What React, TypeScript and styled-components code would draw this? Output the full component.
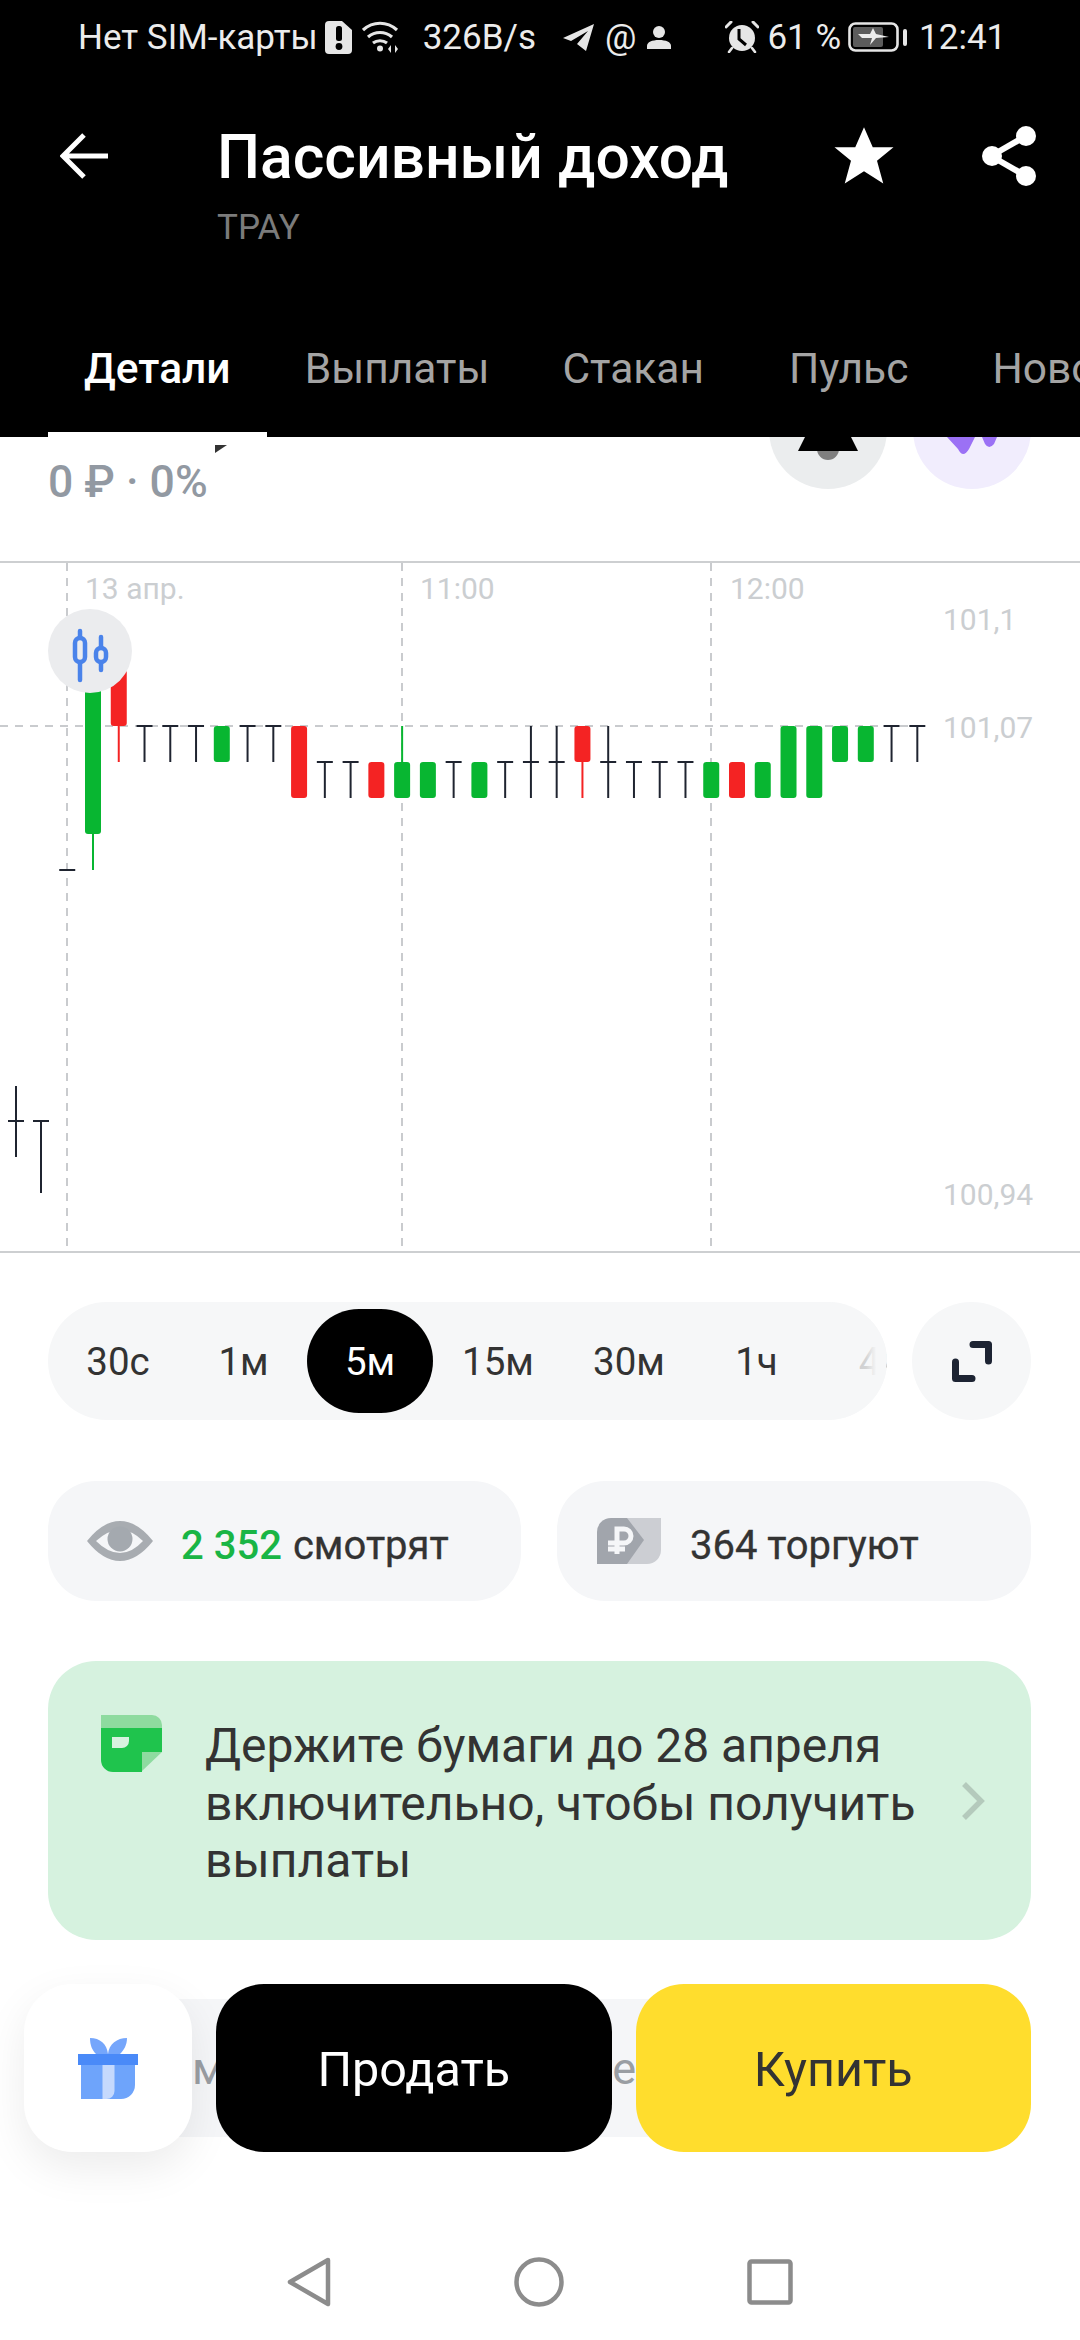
import React from 'react';
import styled, { createGlobalStyle } from 'styled-components';

const GlobalStyle = createGlobalStyle`
    html, body {
        margin: 0;
        padding: 0;
        background: #fff;
    }
    * {
        box-sizing: border-box;
    }
`
const Page = styled.div`
    position: relative;
    display: flex;
    flex-direction: column;
    width: 1080px;
    height: 2340px;
    overflow: hidden;
    background: #fff;
    font-family: Roboto, "Noto Sans", sans-serif;
    color: #333;
`
const Header = styled.header`
    position: relative;
    z-index: 2;
    display: flex;
    flex-direction: column;
    height: 437px;
    flex-shrink: 0;
    background: #000;
    color: #fff;
`
const StatusBar = styled.div`
    display: flex;
    align-items: center;
    height: 74px;
    padding-left: 78px;
    font-size: 35px;
    color: #ececec;
    white-space: nowrap;
`
const StatusGroup = styled.div<{ $left?: number; $gap?: number }>`
    display: flex;
    align-items: center;
    gap: ${p => p.$gap ?? 8}px;
    margin-left: ${p => p.$left ?? 0}px;
`
const TitleRow = styled.div`
    display: flex;
    align-items: flex-start;
    height: 150px;
    padding: 52px 44px 0 60px;
`
const BackButton = styled.div`
    width: 48px;
    height: 46px;
    margin-top: 7px;
    margin-right: 109px;
`
const TitleBlock = styled.div`
    flex: 1;
`
const Title = styled.h1`
    margin: 0;
    font-size: 60.6px;
    font-weight: 500;
    line-height: 64px;
    white-space: nowrap;
`
const Ticker = styled.div`
    margin-top: 18px;
    font-size: 35px;
    line-height: 40px;
    color: #7b7b7b;
`
const HeaderIcons = styled.div`
    display: flex;
    align-items: center;
    gap: 88px;
`
const Tabs = styled.nav`
    display: flex;
    margin-top: auto;
    padding-left: 48px;
    height: 138px;
    overflow: hidden;
`
const Tab = styled.div<{ $active?: boolean; $left?: number }>`
    position: relative;
    display: flex;
    align-items: center;
    flex-shrink: 0;
    padding: 0 36px;
    margin-left: ${p => p.$left ?? 0}px;
    font-size: 42.5px;
    color: ${p => (p.$active ? '#fff' : '#a4a4a4')};
    font-weight: ${p => (p.$active ? 500 : 400)};

    ${p => p.$active && `
        &::after {
            content: '';
            position: absolute;
            left: 0;
            right: 0;
            bottom: 0;
            height: 5px;
            background: #fff;
        }
    `}
`
const Main = styled.main`
    position: relative;
    flex: 1;
    overflow: hidden;
`
const Summary = styled.section`
    display: flex;
    justify-content: space-between;
    height: 124px;
    padding: 0 49px 0 48px;
    overflow: hidden;
`
const ClippedGlyph = styled.div`
    height: 21px;
    padding: 1px 0 0 167px;
`
const Amount = styled.div`
    font-size: 44.5px;
    line-height: 48px;
    font-weight: 500;
    color: #9299a2;
`
const RoundButtons = styled.div`
    display: flex;
    gap: 26px;
    margin-top: -66px;
`
const RoundButton = styled.div<{ $tint: string }>`
    display: flex;
    justify-content: center;
    width: 118px;
    height: 118px;
    padding-top: 66px;
    border-radius: 50%;
    background: ${p => p.$tint};
`
const ChartBox = styled.section`
    height: 692px;
    border-top: 2px solid #cdcfd1;
    border-bottom: 2px solid #cdcfd1;
`
const ChartSvg = styled.svg`
    display: block;
    width: 1080px;
    height: 688px;
`
const IntervalRow = styled.div`
    display: flex;
    gap: 25px;
    margin: 49px 49px 0 48px;
`
const IntervalPill = styled.div`
    position: relative;
    display: flex;
    align-items: center;
    width: 839px;
    height: 118px;
    padding-left: 4px;
    border-radius: 59px;
    background: #f6f7f8;
    overflow: hidden;
`
const IntervalItem = styled.div<{ $active?: boolean; $nudge: number }>`
    display: flex;
    align-items: center;
    justify-content: center;
    flex-shrink: 0;
    width: 126px;
    margin-right: 1.5px;
    height: 104px;
    padding-left: ${p => p.$nudge}px;
    border-radius: 52px;
    font-size: 38.5px;
    color: ${p => (p.$active ? '#fff' : '#333')};
    background: ${p => (p.$active ? '#000' : 'transparent')};
`
const FadeEdge = styled.div`
    position: absolute;
    top: 0;
    right: 0;
    width: 70px;
    height: 100%;
    background: linear-gradient(90deg, rgba(246, 247, 248, 0.7), rgba(246, 247, 248, 0.82) 70%, #f6f7f8 85%);
`
const RoundSquare = styled.div`
    display: flex;
    align-items: center;
    justify-content: center;
    width: 119px;
    height: 118px;
    border-radius: 50%;
    background: #f6f7f8;
`
const StatsRow = styled.div`
    display: flex;
    gap: 36px;
    margin: 61px 49px 0 48px;
`
const StatCard = styled.div<{ $pad: number; $gap: number }>`
    display: flex;
    align-items: center;
    flex: 1;
    gap: ${p => p.$gap}px;
    height: 120px;
    padding-left: ${p => p.$pad}px;
    border-radius: 48px;
    background: #f5f6f8;
    font-size: 40px;
    color: #333;
    white-space: nowrap;
`
const StatText = styled.div`
    padding-top: 9px;
    -webkit-text-stroke: 0.3px #333;
`
const Green = styled.span`
    margin-right: 11px;
    color: #19b545;
    font-weight: 500;
    -webkit-text-stroke: 0;
`
const Banner = styled.div`
    display: flex;
    align-items: flex-start;
    height: 279px;
    margin: 60px 49px 0 48px;
    padding: 54px 46px 0 53px;
    border-radius: 48px;
    background: #d6f2df;
`
const BannerIcon = styled.div`
    width: 61px;
    height: 57px;
    flex-shrink: 0;
`
const BannerText = styled.div`
    flex: 1;
    margin: 2px 0 0 43px;
    font-size: 48px;
    line-height: 57.5px;
    color: #333;
    white-space: nowrap;
`
const BannerChevron = styled.div`
    align-self: center;
    margin-top: -50px;
`
const PeekPill = styled.div`
    display: flex;
    justify-content: space-between;
    align-items: center;
    height: 138px;
    margin: 59px 49px 0 48px;
    padding: 0 395px 0 144px;
    border-radius: 48px;
    background: #f5f6f8;
    font-size: 45px;
    color: #9a9ea3;
`
const BottomBar = styled.div`
    position: absolute;
    left: 24px;
    right: 49px;
    top: 1547px;
    display: flex;
    gap: 24px;
`
const GiftButton = styled.div`
    display: flex;
    align-items: center;
    justify-content: center;
    width: 168px;
    height: 168px;
    border-radius: 48px;
    background: #fff;
    box-shadow: 0 16px 44px rgba(0, 0, 0, 0.08);
`
const ActionButton = styled.div<{ $bg: string; $fg: string }>`
    display: flex;
    align-items: center;
    justify-content: center;
    flex: 1;
    height: 168px;
    padding-top: 2px;
    border-radius: 48px;
    background: ${p => p.$bg};
    color: ${p => p.$fg};
    font-size: 48.5px;
`
const NavBar = styled.div`
    display: flex;
    align-items: center;
    justify-content: center;
    gap: 183px;
    height: 116px;
    flex-shrink: 0;
`

type Kind = 'green' | 'red' | 'doji'
interface ICandle {
    i: number
    kind: Kind
    high: number
    low: number
    top?: number
    bottom?: number
}

const levelA = 726
const levelB = 762
const levelC = 798

const body = (i: number, kind: Kind, top: number, bottom: number, high = top, low = bottom): ICandle =>
    ({ i, kind, high, low, top, bottom })
const cross = (i: number, bar: number, high: number, low: number): ICandle =>
    ({ i, kind: 'doji', high, low, top: bar, bottom: bar })

const candles: ICandle[] = [
    cross(-1, 870, 870, 870),
    body(0, 'green', 680, 834, 680, 870),
    body(1, 'red', 670, levelA, 670, levelB),
    cross(2, levelA, levelA, levelB),
    cross(3, levelA, levelA, levelB),
    cross(4, levelA, levelA, levelB),
    body(5, 'green', levelA, levelB),
    cross(6, levelA, levelA, levelB),
    cross(7, levelA, levelA, levelB),
    body(8, 'red', levelA, levelC),
    cross(9, levelB, levelB, levelC),
    cross(10, levelB, levelB, levelC),
    body(11, 'red', levelB, levelC),
    body(12, 'green', levelB, levelC, levelA, levelC),
    body(13, 'green', levelB, levelC),
    cross(14, levelB, levelB, levelC),
    body(15, 'green', levelB, levelC),
    cross(16, levelB, levelB, levelC),
    cross(17, levelB, levelA, levelC),
    cross(18, levelB, levelA, levelC),
    body(19, 'red', levelA, levelB, levelA, levelC),
    cross(20, levelB, levelA, levelC),
    cross(21, levelB, levelB, levelC),
    cross(22, levelB, levelB, levelC),
    cross(23, levelB, levelB, levelC),
    body(24, 'green', levelB, levelC),
    body(25, 'red', levelB, levelC),
    body(26, 'green', levelB, levelC),
    body(27, 'green', levelA, levelC),
    body(28, 'green', levelA, levelC),
    body(29, 'green', levelA, levelB),
    body(30, 'green', levelA, levelB),
    cross(31, levelA, levelA, levelB),
    cross(32, levelA, levelA, levelB),
]

const colors: Record<Kind, string> = { green: '#08b631', red: '#f42323', doji: '#1f2430' }

const CandleMark = ({ candle }: { candle: ICandle }) => {
    const x = 93 + candle.i * 25.76
    const color = colors[candle.kind]
    if (candle.kind === 'doji') {
        return (
            <g stroke={color} strokeWidth="2">
                {candle.high !== candle.low && <line x1={x} x2={x} y1={candle.high} y2={candle.low} />}
                <line x1={x - 8} x2={x + 8} y1={candle.top} y2={candle.top} />
            </g>
        )
    }
    return (
        <g>
            <line x1={x} x2={x} y1={candle.high} y2={candle.low} stroke={color} strokeWidth="2" />
            <rect x={x - 8} y={candle.top} width="16" height={candle.bottom! - candle.top!} rx="3" fill={color} />
        </g>
    )
}

const Chart = () => (
    <ChartSvg viewBox="0 563 1080 688">
        <g stroke="#c9cbce" strokeWidth="2" strokeDasharray="8 7">
            <line x1="67" x2="67" y1="563" y2="1251" />
            <line x1="402" x2="402" y1="563" y2="1251" />
            <line x1="711" x2="711" y1="563" y2="1251" />
            <line x1="0" x2="930" y1="726" y2="726" />
        </g>
        <g fill="#cbced1" fontFamily="Roboto, sans-serif" fontSize="30">
            <text x="85" y="599">13 апр.</text>
            <text x="420" y="599">11:00</text>
            <text x="730" y="599">12:00</text>
            <text x="943" y="630">101,1</text>
            <text x="943" y="738">101,07</text>
            <text x="943" y="1205">100,94</text>
        </g>
        {candles.map(c => <CandleMark key={c.i} candle={c} />)}
        <g stroke="#1f2430" strokeWidth="2">
            <line x1="16" x2="16" y1="1086" y2="1157" />
            <line x1="8" x2="24" y1="1121" y2="1121" />
            <line x1="41" x2="41" y1="1121" y2="1193" />
            <line x1="33" x2="49" y1="1121" y2="1121" />
        </g>
        <circle cx="90" cy="651" r="42" fill="#ebecee" />
        <g stroke="#4a83ea" strokeLinecap="round" fill="none">
            <line x1="80" x2="80" y1="631" y2="680" strokeWidth="4.5" />
            <rect x="75" y="638" width="10" height="24" rx="5" strokeWidth="4.5" fill="#ebecee" />
            <line x1="101" x2="101" y1="637" y2="670" strokeWidth="4.5" />
            <rect x="96" y="648" width="10" height="14" rx="5" strokeWidth="4.5" fill="#ebecee" />
        </g>
    </ChartSvg>
)

const SimAlert = () => (
    <svg width="27" height="33" viewBox="0 0 27 33">
        <path d="M4 0h13l10 9v20a4 4 0 0 1-4 4H4a4 4 0 0 1-4-4V4a4 4 0 0 1 4-4z" fill="#e6e6e6" />
        <rect x="11" y="5" width="6" height="15" rx="2.5" fill="#000" />
        <circle cx="14" cy="25.5" r="3.4" fill="#000" />
    </svg>
)
const Wifi = () => (
    <svg width="38" height="32" viewBox="0 0 38 32" fill="none" stroke="#e6e6e6" strokeWidth="3.2">
        <path d="M1 9c10-9 24-9 34 0" />
        <path d="M6 16c7-6 17-6 24 0" />
        <path d="M11 22c4-3 10-3 14 0" />
        <circle cx="18" cy="27.5" r="3" fill="#e6e6e6" stroke="none" />
        <path d="M26 28l3-4v8zM36 28l-3 4v-8z" fill="#e6e6e6" stroke="none" />
    </svg>
)
const TelegramArrow = () => (
    <svg width="31" height="27" viewBox="0 0 31 27">
        <path d="M0 14 31 0 23 27 14 20 25 7 8 17z" fill="#e6e6e6" />
    </svg>
)
const Person = () => (
    <svg width="24" height="23" viewBox="0 0 24 23" fill="#e6e6e6">
        <circle cx="12" cy="6" r="6" />
        <path d="M0 23v-3c0-4 5-6 12-6s12 2 12 6v3z" />
    </svg>
)
const AlarmIcon = () => (
    <svg width="34" height="32" viewBox="0 0 34 32">
        <circle cx="17" cy="17" r="13" fill="#e6e6e6" />
        <path d="M14 8v10l7 6" stroke="#000" strokeWidth="3" fill="none" />
        <path d="M1 6 6 1M33 6 28 1" stroke="#e6e6e6" strokeWidth="3" strokeLinecap="round" />
        <path d="M7 27 4 31M27 27l3 4" stroke="#e6e6e6" strokeWidth="2.6" strokeLinecap="round" />
    </svg>
)
const Battery = () => (
    <svg width="59" height="30" viewBox="0 0 59 30">
        <rect x="1.5" y="1.5" width="48" height="27" rx="6" fill="none" stroke="#e6e6e6" strokeWidth="2.6" />
        <rect x="5" y="5" width="30" height="20" rx="2" fill="#5c5c5c" />
        <path d="M10 12h12l3-6 3 6 13 3-13 1-6 7 2-7H14z" fill="#ececec" />
        <rect x="55" y="7" width="4" height="17" rx="2" fill="#e6e6e6" />
    </svg>
)
const BackArrow = () => (
    <svg width="48" height="46" viewBox="0 0 48 46" fill="none" stroke="#fff" strokeWidth="5">
        <path d="M48 23H3M24 2 3 23l21 21" />
    </svg>
)
const Star = () => (
    <svg width="60" height="58" viewBox="0 0 24 23" fill="#fff">
        <path d="M12 0l3.5 8h8.3l-6.6 5.4 2.5 9.1L12 17.6l-7.7 4.9 2.5-9.1L.2 8h8.3z" />
    </svg>
)
const Share = () => (
    <svg width="54" height="60" viewBox="0 0 54 60">
        <g stroke="#fff" strokeWidth="6">
            <line x1="44" y1="10" x2="9" y2="30" />
            <line x1="44" y1="50" x2="9" y2="30" />
        </g>
        <g fill="#fff">
            <circle cx="44" cy="10" r="10" />
            <circle cx="44" cy="50" r="10" />
            <circle cx="10" cy="30" r="10" />
        </g>
    </svg>
)
const TitleTail = () => (
    <svg width="12" height="8" viewBox="0 0 12 8" fill="#333">
        <path d="M0 0h12L0 8z" />
    </svg>
)
const Bell = () => (
    <svg width="60" height="23" viewBox="0 0 60 23">
        <circle cx="30" cy="12" r="11" fill="#7f7f7f" />
        <path d="M7 0h46l7 14H0z" fill="#000" />
    </svg>
)
const PurpleMark = () => (
    <svg width="50" height="18" viewBox="0 0 50 18" fill="#9b71f5">
        <path d="M0 0h28l-6 12q-6 10-11 0zM35 0h15l-3 7q-5 6-9 0z" />
    </svg>
)
const Fullscreen = () => (
    <svg width="40" height="41" viewBox="0 0 40 41" fill="none" stroke="#1d2433" strokeWidth="7" strokeLinejoin="round" strokeLinecap="round">
        <path d="M21 3.5h15.5V20M3.5 21v16.5H20" />
    </svg>
)
const Eye = () => (
    <svg width="66" height="40" viewBox="0 0 66 40">
        <path d="M0 20 Q16 0 33 0 Q50 0 66 20 Q50 40 33 40 Q16 40 0 20z" fill="#a8acb1" />
        <path d="M9 20 Q21 9 33 9 Q45 9 56 20 Q45 32 33 32 Q21 32 9 20z" fill="#f5f6f8" />
        <circle cx="33" cy="18" r="12.5" fill="#a4a9af" />
    </svg>
)
const RubleCard = () => (
    <svg width="64" height="46" viewBox="0 0 64 46">
        <path d="M28 0h36v32a14 14 0 0 1-14 14H28z" fill="#ccced3" />
        <path d="M0 14A14 14 0 0 1 14 0h16l17 22-17 24H0z" fill="#a1a5ac" />
        <path d="M20 36V11h7a6.5 6.5 0 0 1 0 14H11M11 31h17" stroke="#f5f6f8" strokeWidth="5" fill="none" />
    </svg>
)
const NoteIcon = () => (
    <svg width="61" height="57" viewBox="0 0 61 57">
        <path d="M0 0h51a10 10 0 0 1 10 10v3H0z" fill="#8edb9f" />
        <path d="M0 13h61v24H41v20H12A12 12 0 0 1 0 45z" fill="#1fc44d" />
        <path d="M41 37h20L41 56z" fill="#8edba0" />
        <path d="M11 22h17v4a7 7 0 0 1-7 7H11z" fill="#d7f2df" />
    </svg>
)
const Chevron = () => (
    <svg width="24" height="38" viewBox="0 0 24 38" fill="none" stroke="#b4cabc" strokeWidth="5.5">
        <path d="M3 2l17 17L3 36" />
    </svg>
)
const Gift = () => (
    <svg width="60" height="61" viewBox="0 0 60 61">
        <path d="M12 0c10 0 17 6 18 16H18C14 12 12 7 12 0zM49 0c-10 0-18 6-19 16h12c4-4 7-9 7-16z" fill="#75a6fb" />
        <path d="M3 27h54v20a14 14 0 0 1-14 14H3z" fill="#6ea4fb" />
        <rect x="0" y="16" width="60" height="11" fill="#4a8af8" />
        <path d="M24.5 27h12v26a8 8 0 0 1-8 8h-4z" fill="#c5d9fd" />
    </svg>
)
const NavBack = () => (
    <svg width="44" height="50" viewBox="0 0 44 50" fill="none" stroke="#8c8c8c" strokeWidth="4.5" strokeLinejoin="round">
        <path d="M41 3 3 25l38 22z" />
    </svg>
)
const NavHome = () => (
    <svg width="50" height="50" viewBox="0 0 50 50" fill="none" stroke="#8c8c8c" strokeWidth="4.5">
        <circle cx="25" cy="25" r="22.5" />
    </svg>
)
const NavRecent = () => (
    <svg width="46" height="46" viewBox="0 0 46 46" fill="none" stroke="#8c8c8c" strokeWidth="4.5" strokeLinejoin="round">
        <rect x="2.5" y="2.5" width="41" height="41" rx="2" />
    </svg>
)

const intervals = [
    { label: '30с', nudge: 6 },
    { label: '1м', nudge: 2 },
    { label: '5м', nudge: 0 },
    { label: '15м', nudge: 1 },
    { label: '30м', nudge: 8 },
    { label: '1ч', nudge: 8 },
    { label: '4ч', nudge: 0 },
]

const App = () => (
    <Page>
        <GlobalStyle />
        <Header>
            <StatusBar>
                <StatusGroup>Нет SIM-карты</StatusGroup>
                <StatusGroup $left={7}><SimAlert /></StatusGroup>
                <StatusGroup $left={10}><Wifi /></StatusGroup>
                <StatusGroup $left={23}>326B/s</StatusGroup>
                <StatusGroup $left={27} $gap={11}><TelegramArrow /><span>@</span><Person /></StatusGroup>
                <StatusGroup $left={54}><AlarmIcon /></StatusGroup>
                <StatusGroup $left={8}>61 %</StatusGroup>
                <StatusGroup $left={7}><Battery /></StatusGroup>
                <StatusGroup $left={12}>12:41</StatusGroup>
            </StatusBar>
            <TitleRow>
                <BackButton><BackArrow /></BackButton>
                <TitleBlock>
                    <Title>Пассивный доход</Title>
                    <Ticker>TPAY</Ticker>
                </TitleBlock>
                <HeaderIcons>
                    <Star />
                    <Share />
                </HeaderIcons>
            </TitleRow>
            <Tabs>
                <Tab $active>Детали</Tab>
                <Tab $left={2}>Выплаты</Tab>
                <Tab $left={1}>Стакан</Tab>
                <Tab $left={13}>Пульс</Tab>
                <Tab $left={12}>Новости</Tab>
            </Tabs>
        </Header>
        <Main>
            <Summary>
                <div>
                    <ClippedGlyph><TitleTail /></ClippedGlyph>
                    <Amount>0 ₽ · 0%</Amount>
                </div>
                <RoundButtons>
                    <RoundButton $tint="#ebedee"><Bell /></RoundButton>
                    <RoundButton $tint="#f1edfd"><PurpleMark /></RoundButton>
                </RoundButtons>
            </Summary>
            <ChartBox><Chart /></ChartBox>
            <IntervalRow>
                <IntervalPill>
                    {intervals.map(({ label, nudge }) => (
                        <IntervalItem key={label} $active={label === '5м'} $nudge={nudge}>{label}</IntervalItem>
                    ))}
                    <FadeEdge />
                </IntervalPill>
                <RoundSquare><Fullscreen /></RoundSquare>
            </IntervalRow>
            <StatsRow>
                <StatCard $pad={39} $gap={28}><Eye /><StatText><Green>2 352</Green>смотрят</StatText></StatCard>
                <StatCard $pad={40} $gap={29}><RubleCard /><StatText>364 торгуют</StatText></StatCard>
            </StatsRow>
            <Banner>
                <BannerIcon><NoteIcon /></BannerIcon>
                <BannerText>Держите бумаги до 28 апреля<br />включительно, чтобы получить<br />выплаты</BannerText>
                <BannerChevron><Chevron /></BannerChevron>
            </Banner>
            <PeekPill><span>м</span><span>е</span></PeekPill>
            <BottomBar>
                <GiftButton><Gift /></GiftButton>
                <ActionButton $bg="#000" $fg="#fff">Продать</ActionButton>
                <ActionButton $bg="#ffdd2d" $fg="#333">Купить</ActionButton>
            </BottomBar>
        </Main>
        <NavBar>
            <NavBack />
            <NavHome />
            <NavRecent />
        </NavBar>
    </Page>
)

export default App;
